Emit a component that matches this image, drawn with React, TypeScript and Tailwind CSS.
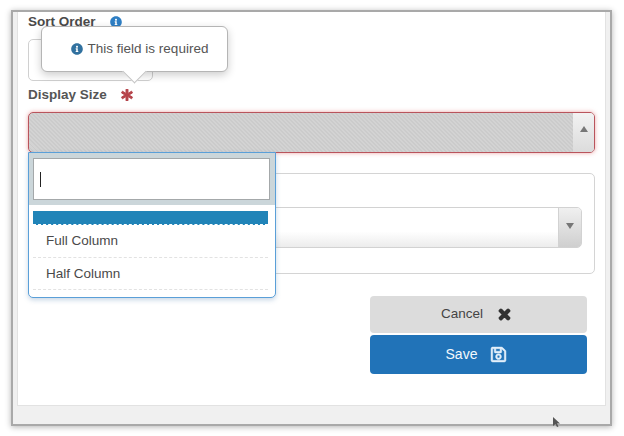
import { FaInfoCircle, FaAsterisk, FaTimes, FaRegSave } from "react-icons/fa";

export default function App() {
  return (
    <div className="w-[624px] h-[436px] bg-white pt-[10px] pl-[11px] overflow-hidden font-['Liberation_Sans',Arial,sans-serif]">
      <div className="relative w-[601px] h-[416px] border-2 border-[#a9a9a9] bg-[#f0f0f0] shadow-[0_1px_6px_rgba(0,0,0,0.3)] pl-[4px] pr-[4px]">
        <div className="relative h-[394px] bg-white border-b border-x border-[#e2e2e2] px-[10px] pt-[2px]">
          <div className="flex items-center h-[16px] text-[13.5px] font-bold text-[#4a4a4a]">
            Sort Order
            <FaInfoCircle className="ml-[14px] text-[12px] text-[#2f7fc4]" />
          </div>
          <div className="relative mt-[9px] w-[125px] h-[42px] rounded-[5px] border border-[#d0d0d0] bg-white" />
          <div className="flex items-center h-[16px] mt-[6px] text-[13.5px] font-bold text-[#555]">
            Display Size
            <FaAsterisk className="ml-[14px] text-[12px] text-[#b5434a] stroke-current stroke-[40]" />
          </div>
          <div className="mt-[9px] w-[567px] h-[41px] flex justify-end rounded-[5px] border border-[#b9545c] shadow-[0_0_4px_rgba(220,80,80,0.5)] bg-[repeating-linear-gradient(45deg,#cbcbcb_0,#cbcbcb_1.41px,#d3d3d3_1.41px,#d3d3d3_2.83px)] overflow-hidden">
            <div className="w-[21px] flex items-start justify-center pt-[13px] bg-gradient-to-b from-[#f2f2f2] to-[#dcdcdc]">
              <div className="w-0 h-0 border-x-[4px] border-x-transparent border-b-[6px] border-b-[#777]" />
            </div>
          </div>
          <div className="mt-[20px] w-[567px] h-[101px] rounded-[5px] border border-[#d4d4d4] pt-[33px] pl-[12px] pr-[12px]">
            <div className="h-[41px] flex justify-end rounded-[5px] border border-[#d2d2d2] bg-gradient-to-b from-white from-60% to-[#ececec] overflow-hidden">
              <div className="w-[23px] flex items-start justify-center pt-[15px] border-l border-[#d2d2d2] bg-gradient-to-b from-[#f0f0f0] to-[#cfcfcf]">
                <div className="w-0 h-0 border-x-[4px] border-x-transparent border-t-[6px] border-t-[#777]" />
              </div>
            </div>
          </div>
          <div className="mt-[22px] ml-[342px] w-[217px] flex flex-col gap-[2px]">
            <button className="h-[37px] pr-[4px] flex items-center justify-center gap-[14px] rounded-[4px] bg-[#dcdcdc] text-[13.5px] text-[#444]">
              Cancel
              <FaTimes className="text-[15px] text-[#333] stroke-current stroke-[50]" />
            </button>
            <button className="h-[39px] pr-[4px] flex items-center justify-center gap-[13px] rounded-[4px] bg-[#2173b8] text-[14px] text-[#f2f8fc]">
              Save
              <FaRegSave className="text-[17px] text-[#e4f0fa] stroke-current stroke-[15]" />
            </button>
          </div>

          <div className="absolute left-[10px] top-[140px] w-[248px] h-[146px] rounded-b-[5px] border border-[#5a9fd8] bg-white shadow-[0_2px_5px_rgba(70,120,170,0.3)]">
            <div className="h-[52px] bg-[#cbd6da] pt-[5px] pl-[4px]">
              <div className="h-[42px] w-[237px] bg-white border border-[#a4a8aa] flex items-center pl-[6px]">
                <div className="w-px h-[15px] bg-[#222]" />
              </div>
            </div>
            <div className="ml-[4px] mt-[6px] h-[14px] w-[235px] bg-[#2184b8] border-b border-dashed border-white" />
            <div className="ml-[4px] w-[235px] h-[33px] pl-[13px] flex items-center text-[13.5px] text-[#4a4a4a] border-b border-dashed border-[#e2e2e2]">
              Full Column
            </div>
            <div className="ml-[4px] w-[235px] h-[32px] pl-[13px] pt-[1px] flex items-center text-[13.5px] text-[#4a4a4a] border-b border-dashed border-[#e2e2e2]">
              Half Column
            </div>
          </div>

          <div className="absolute left-[23px] top-[14px] w-[187px] h-[46px] rounded-[6px] border border-[#b5b5b5] bg-white shadow-[0_3px_8px_rgba(0,0,0,0.2)] flex items-center justify-center gap-[5px] pl-[10px] text-[13.5px] text-[#555]">
            <FaInfoCircle className="text-[12px] text-[#31719f]" />
            This field is required
            <div className="absolute left-[84px] top-[36px] w-[17px] h-[17px] rotate-45 bg-white border-r border-b border-[#c4c4c4]" />
          </div>
        </div>
        <svg className="absolute left-[539px] top-[405px]" width="10" height="12" viewBox="0 0 10 12">
          <path d="M1 0 L1 9 L3.5 7 L5 10 L6.5 9.5 L5 6.5 L8 6.5 Z" fill="#555" />
        </svg>
      </div>
    </div>
  );
}
